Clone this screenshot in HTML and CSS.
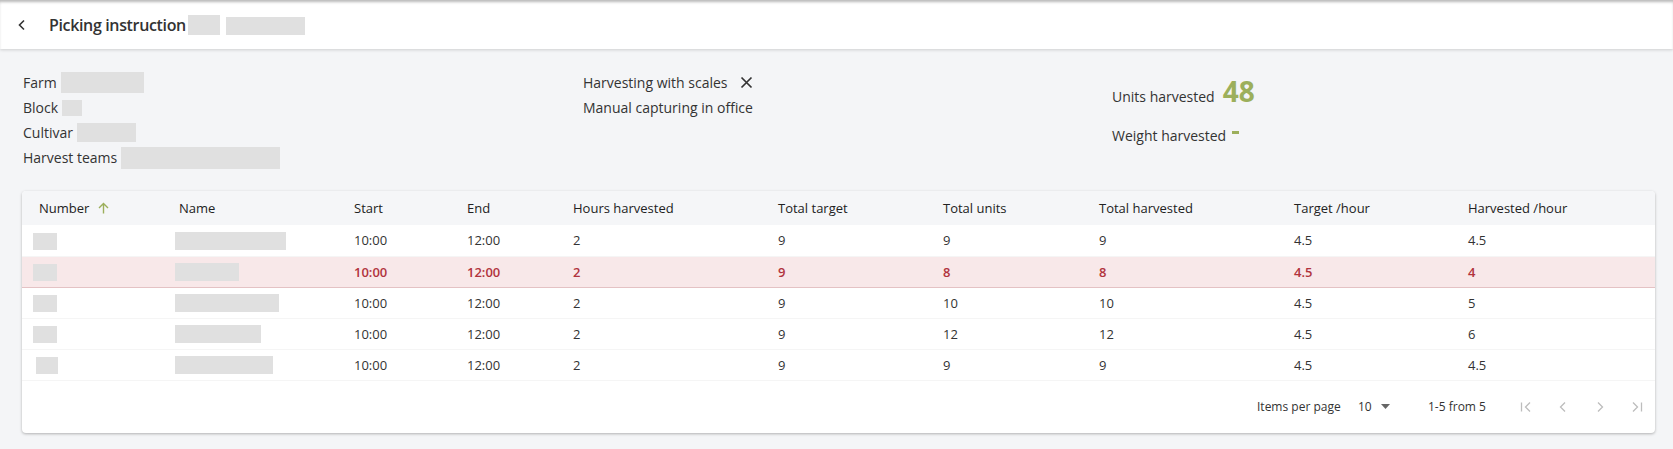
FILE: index.html
```html
<!DOCTYPE html>
<html>
<head>
<meta charset="utf-8">
<title>Picking instruction</title>
<link rel="stylesheet" href="styles.css">
</head>
<body>
<header class="topbar">
  <span class="back">
    <svg width="10" height="12" viewBox="0 0 10 12"><path d="M7 1.5 L2.5 6 L7 10.5" fill="none" stroke="#333" stroke-width="1.6"/></svg>
  </span>
  <h1 class="title">Picking instruction</h1>
  <span class="ph ph-t1"></span>
  <span class="ph ph-t2"></span>
</header>

<section class="info">
  <div class="info-col">
    <div class="line">Farm <span class="ph ph-farm"></span></div>
    <div class="line">Block <span class="ph ph-block"></span></div>
    <div class="line">Cultivar <span class="ph ph-cult"></span></div>
    <div class="line">Harvest teams <span class="ph ph-teams"></span></div>
  </div>
  <div class="info-col">
    <div class="line">Harvesting with scales
      <svg class="xicon" width="13" height="13" viewBox="0 0 13 13"><path d="M1.5 1.5 L11.5 11.5 M11.5 1.5 L1.5 11.5" stroke="#333" stroke-width="1.7"/></svg>
    </div>
    <div class="line">Manual capturing in office</div>
  </div>
  <div class="info-col stats">
    <div class="stat stat-units">Units harvested <span class="big">48</span></div>
    <div class="stat stat-weight">Weight harvested <span class="dash"></span></div>
  </div>
</section>

<section class="card">
  <table class="grid">
    <colgroup>
      <col class="w1"><col class="w2"><col class="w3"><col class="w4"><col class="w5">
      <col class="w6"><col class="w7"><col class="w8"><col class="w9"><col class="w10">
    </colgroup>
    <thead>
      <tr>
        <th class="first">Number <svg class="sort" width="11" height="12" viewBox="0 0 11 12"><path d="M5.5 11.5 V1.5 M1 6 L5.5 1.5 L10 6" fill="none" stroke="#9caf5b" stroke-width="1.4"/></svg></th>
        <th>Name</th><th>Start</th><th>End</th><th>Hours harvested</th><th>Total target</th>
        <th>Total units</th><th>Total harvested</th><th>Target /hour</th><th>Harvested /hour</th>
      </tr>
    </thead>
    <tbody>
      <tr>
        <td class="first"><span class="ph ph-num"></span></td>
        <td><span class="ph ph-name" style="width:111px"></span></td>
        <td>10:00</td><td>12:00</td><td>2</td><td>9</td><td>9</td><td>9</td><td>4.5</td><td>4.5</td>
      </tr>
      <tr class="alert">
        <td class="first"><span class="ph ph-num"></span></td>
        <td><span class="ph ph-name" style="width:64px"></span></td>
        <td>10:00</td><td>12:00</td><td>2</td><td>9</td><td>8</td><td>8</td><td>4.5</td><td>4</td>
      </tr>
      <tr>
        <td class="first"><span class="ph ph-num"></span></td>
        <td><span class="ph ph-name" style="width:104px"></span></td>
        <td>10:00</td><td>12:00</td><td>2</td><td>9</td><td>10</td><td>10</td><td>4.5</td><td>5</td>
      </tr>
      <tr>
        <td class="first"><span class="ph ph-num"></span></td>
        <td><span class="ph ph-name" style="width:86px"></span></td>
        <td>10:00</td><td>12:00</td><td>2</td><td>9</td><td>12</td><td>12</td><td>4.5</td><td>6</td>
      </tr>
      <tr>
        <td class="first"><span class="ph ph-num ph-num-s"></span></td>
        <td><span class="ph ph-name" style="width:98px"></span></td>
        <td>10:00</td><td>12:00</td><td>2</td><td>9</td><td>9</td><td>9</td><td>4.5</td><td>4.5</td>
      </tr>
    </tbody>
  </table>
  <footer class="pager">
    <span class="ipp">Items per page</span>
    <span class="size">10 <svg width="9" height="5" viewBox="0 0 9 5"><path d="M0 0 H9 L4.5 5 Z" fill="#666"/></svg></span>
    <span class="range">1-5 from 5</span>
    <span class="nav">
      <svg width="12" height="12" viewBox="0 0 12 12"><path d="M1.5 1.5 V10.5 M10 1.5 L5.5 6 L10 10.5" fill="none" stroke="#bdbdbd" stroke-width="1.3"/></svg>
      <svg width="12" height="12" viewBox="0 0 12 12"><path d="M8 1.5 L3.5 6 L8 10.5" fill="none" stroke="#bdbdbd" stroke-width="1.3"/></svg>
      <svg width="12" height="12" viewBox="0 0 12 12"><path d="M4 1.5 L8.5 6 L4 10.5" fill="none" stroke="#bdbdbd" stroke-width="1.3"/></svg>
      <svg width="12" height="12" viewBox="0 0 12 12"><path d="M2 1.5 L6.5 6 L2 10.5 M10.5 1.5 V10.5" fill="none" stroke="#bdbdbd" stroke-width="1.3"/></svg>
    </span>
  </footer>
</section>
</body>
</html>
```

FILE: styles.css
```css
* { box-sizing: border-box; }

html, body {
  margin: 0;
  padding: 0;
}

body {
  background: #f4f5f7;
  font-family: "Open Sans", "Noto Sans", sans-serif;
  color: #333;
  font-size: 14px;
  width: 1673px;
  height: 449px;
  overflow: hidden;
}

.ph {
  display: inline-block;
  background: #e0e0e0;
  vertical-align: middle;
}

/* top bar */
.topbar {
  height: 49px;
  background: #fff;
  display: flex;
  align-items: center;
  padding-left: 17px;
  box-shadow: inset 0 3px 3px -1px rgba(0, 0, 0, 0.28), 0 1px 3px rgba(0, 0, 0, 0.16);
  position: relative;
  z-index: 1;
}

.back {
  display: flex;
  width: 32px;
  align-items: center;
}

.title {
  margin: 0;
  font-size: 16px;
  font-weight: 600;
  color: #333;
  letter-spacing: -0.35px;
}

.ph-t1 { width: 32px; height: 20px; margin-left: 2px; }
.ph-t2 { width: 79px; height: 18px; margin-left: 6px; margin-top: 2px; }

/* info */
.info {
  display: grid;
  grid-template-columns: 560px 529px 1fr;
  padding: 21px 0 0 23px;
}

.line {
  height: 25px;
  line-height: 25px;
  display: flex;
  align-items: center;
  white-space: nowrap;
}

.line .ph { margin-left: 4px; }
.ph-farm { width: 83px; height: 21px; }
.ph-block { width: 20px; height: 16px; }
.ph-cult { width: 59px; height: 19px; }
.ph-teams { width: 159px; height: 22px; }

.xicon { margin-left: 12px; }

.stats { padding-top: 3px; }

.stat {
  display: flex;
  align-items: baseline;
  white-space: nowrap;
}

.stat-units { height: 36px; }
.stat-weight { margin-top: 17px; align-items: center; }

.big {
  font-size: 28px;
  font-weight: 700;
  color: #9caf5b;
  margin-left: 8px;
  line-height: 36px;
}

.dash {
  display: inline-block;
  width: 7px;
  height: 3px;
  background: #9caf5b;
  margin-left: 6px;
  position: relative;
  top: -3px;
}

/* card */
.card {
  margin: 21px 18px 0 22px;
  background: #fff;
  border-radius: 4px;
  box-shadow: 0 1px 3px rgba(0, 0, 0, 0.28);
  height: 242px;
  overflow: hidden;
}

.grid {
  width: 100%;
  border-collapse: collapse;
  table-layout: fixed;
  font-size: 13px;
}

.w1 { width: 157px; }
.w2 { width: 175px; }
.w3 { width: 113px; }
.w4 { width: 106px; }
.w5 { width: 205px; }
.w6 { width: 165px; }
.w7 { width: 156px; }
.w8 { width: 195px; }
.w9 { width: 174px; }
.w10 { width: 187px; }

.grid th {
  background: #f5f6f8;
  height: 34px;
  text-align: left;
  font-weight: 500;
  padding: 0;
  color: #222;
  white-space: nowrap;
}

.grid th.first, .grid td.first { padding-left: 17px; }

.sort {
  vertical-align: -1px;
  margin-left: 5px;
}

.grid td {
  height: 31px;
  padding: 0;
  border-bottom: 1px solid #f5f5f5;
  color: #333;
  white-space: nowrap;
}

.grid tr.alert td {
  background: #f8e8e9;
  color: #b1333d;
  font-weight: 600;
  border-bottom: 1px solid #e4c2c4;
}

.ph-num { width: 24px; height: 17px; margin-left: -6px; }
.ph-num-s { width: 22px; margin-left: -3px; }
.ph-name { height: 18px; margin-left: -4px; }

/* pager */
.pager {
  height: 52px;
  display: flex;
  align-items: center;
  font-size: 12px;
  color: #333;
  padding-left: 1235px;
}

.ipp { width: 101px; }

.size {
  width: 70px;
  display: flex;
  align-items: center;
  gap: 9px;
}

.range { width: 92px; }

.nav {
  display: flex;
  gap: 25px;
  align-items: center;
}
```
